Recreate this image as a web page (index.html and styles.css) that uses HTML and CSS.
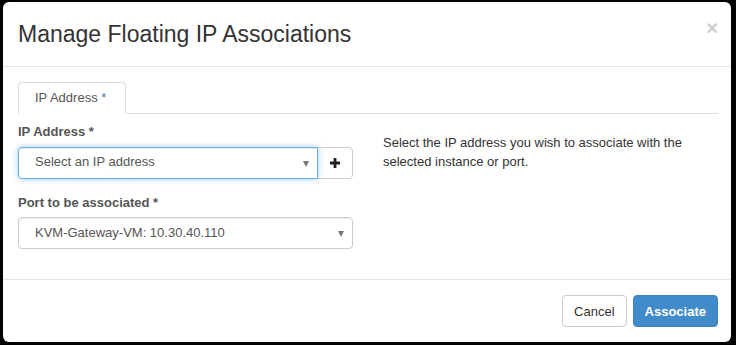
FILE: index.html
```html
<!DOCTYPE html>
<html lang="en">
  <head>
    <meta charset="UTF-8" />
    <title>Manage Floating IP Associations</title>
    <link rel="stylesheet" href="styles.css">
  </head>
  <body>
    <div class="modal">
      <div class="modal-header">
        <h4 class="modal-title">Manage Floating IP Associations</h4>
        <button class="close" type="button">&times;</button>
      </div>
      <div class="modal-body">
        <ul class="nav-tabs">
          <li class="active"><a>IP Address <span class="tab-req">*</span></a></li>
        </ul>
        <div class="tab-content">
          <div class="col-form">
            <div class="form-group">
              <label>IP Address <span class="req">*</span></label>
              <div class="input-group">
                <div class="select focused">
                  <span>Select an IP address</span>
                  <span class="caret"></span>
                </div>
                <button class="addon" type="button">
                  <svg width="10" height="10" viewBox="0 0 10 10">
                    <path d="M3.6 0h2.8v3.6H10v2.8H6.4V10H3.6V6.4H0V3.6h3.6z" fill="#222" />
                  </svg>
                </button>
              </div>
            </div>
            <div class="form-group">
              <label>Port to be associated <span class="req">*</span></label>
              <div class="select">
                <span>KVM-Gateway-VM: 10.30.40.110</span>
                <span class="caret"></span>
              </div>
            </div>
          </div>
          <div class="col-help">
            <p>Select the IP address you wish to associate with the selected instance or port.</p>
          </div>
        </div>
      </div>
      <div class="modal-footer">
        <button class="btn btn-default" type="button">Cancel</button>
        <button class="btn btn-primary" type="button">Associate</button>
      </div>
    </div>
  </body>
</html>
```

FILE: styles.css
```css
body {
  margin: 0;
  padding: 2px 0 0 3px;
  background: #000;
  font-family: "Liberation Sans", Arial, sans-serif;
  font-size: 13px;
  line-height: 1.42857;
  color: #333;
  height: 345px;
  box-sizing: border-box;
  overflow: hidden;
}

.modal {
  width: 728px;
  background: #fff;
  border-radius: 6px;
}

.modal-header {
  display: flex;
  justify-content: space-between;
  align-items: flex-start;
  padding: 15px;
  border-bottom: 1px solid #e5e5e5;
}

.modal-title {
  margin: 0;
  font-size: 23px;
  font-weight: normal;
  line-height: 34px;
  color: #333;
}

.close {
  border: none;
  background: none;
  padding: 0;
  margin: 1px -2px 0 0;
  font-family: inherit;
  font-size: 20px;
  font-weight: bold;
  line-height: 1;
  color: #000;
  opacity: 0.2;
  cursor: pointer;
}

.modal-body {
  padding: 15px;
  width: 700px;
}

.nav-tabs {
  display: flex;
  margin: 0;
  padding: 0;
  list-style: none;
  border-bottom: 1px solid #ddd;
}

.nav-tabs li {
  margin-bottom: -1px;
}

.nav-tabs a {
  display: block;
  padding: 5px 19px 5px 16px;
  line-height: 20px;
  color: #555;
  background: #fff;
  border: 1px solid #ddd;
  border-bottom-color: transparent;
  border-radius: 4px 4px 0 0;
}

.tab-req {
  color: #4a7fb5;
}

.tab-content {
  display: grid;
  grid-template-columns: 335px 320px;
  column-gap: 30px;
  padding-top: 9px;
}

.form-group {
  margin-bottom: 15px;
}

.form-group label {
  display: block;
  margin-bottom: 5px;
  font-weight: bold;
  color: #555;
}

.input-group {
  display: flex;
}

.select {
  position: relative;
  display: flex;
  align-items: center;
  height: 32px;
  box-sizing: border-box;
  padding: 0 16px;
  border: 1px solid #ccc;
  border-radius: 4px;
  color: #555;
  box-shadow: inset 0 1px 1px rgba(0, 0, 0, 0.075);
}

.input-group .select {
  flex: 1;
  border-radius: 4px 0 0 4px;
}

.select.focused {
  border-color: #66afe9;
  box-shadow: inset 0 1px 1px rgba(0, 0, 0, 0.075), 0 0 6px rgba(102, 175, 233, 0.6);
  z-index: 1;
}

.caret {
  position: absolute;
  right: 8px;
  top: 13px;
  width: 0;
  height: 0;
  border-left: 3.5px solid transparent;
  border-right: 3.5px solid transparent;
  border-top: 6px solid #777;
}

.addon {
  width: 36px;
  height: 32px;
  margin-left: -1px;
  padding: 0;
  display: flex;
  align-items: center;
  justify-content: center;
  background: #fff;
  border: 1px solid #ccc;
  border-radius: 0 4px 4px 0;
}

.col-help p {
  margin: 11px 0 0;
  color: #333;
}

.modal-footer {
  display: flex;
  justify-content: flex-end;
  gap: 6px;
  padding: 15px 13px 15px 15px;
  border-top: 1px solid #e5e5e5;
}

.btn {
  height: 32px;
  padding: 0 12px;
  font-family: inherit;
  font-size: 13px;
  border-radius: 4px;
  border: 1px solid #ccc;
  cursor: pointer;
}

.btn-default {
  background: #fff;
  color: #333;
  padding: 0 11px;
}

.btn-primary {
  background: #428bca;
  border-color: #3f84c0;
  color: #fff;
  font-weight: bold;
  padding: 0 11px;
}
```
